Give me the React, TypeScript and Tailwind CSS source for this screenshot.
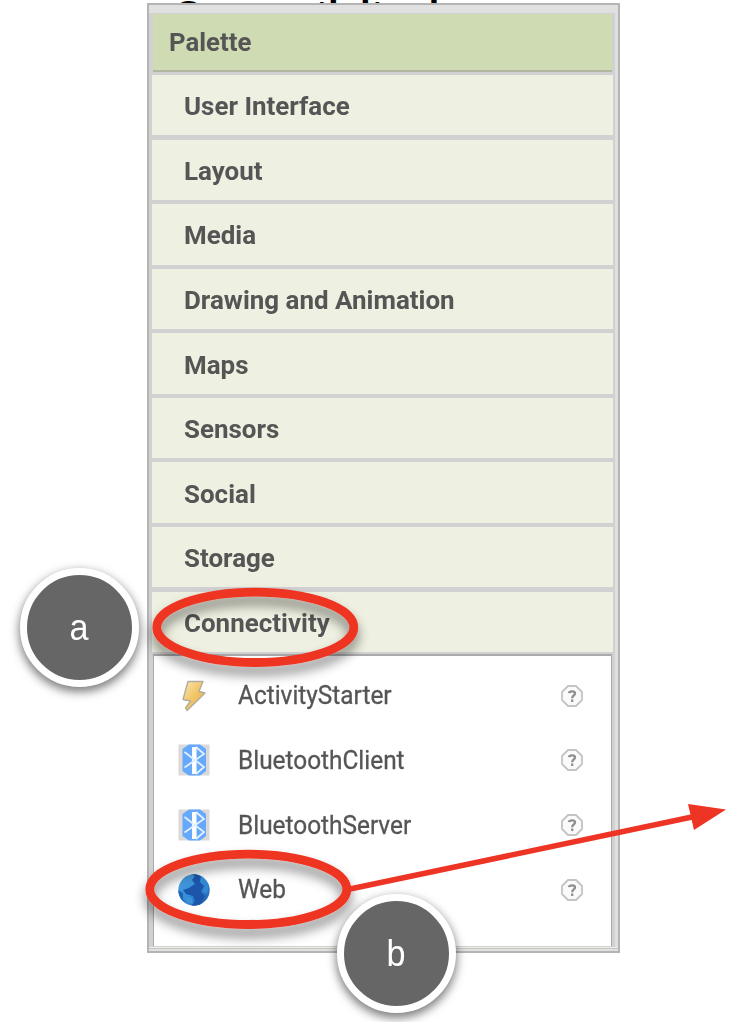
import React from "react";

const categories = [
  "User Interface",
  "Layout",
  "Media",
  "Drawing and Animation",
  "Maps",
  "Sensors",
  "Social",
  "Storage",
  "Connectivity",
];

function Bolt() {
  return (
    <svg className="h-8 w-8" viewBox="0 0 32 32">
      <defs>
        <linearGradient id="bolt" x1="0" y1="0" x2="1" y2="1">
          <stop offset="0" stopColor="#f8e9b4" />
          <stop offset="0.5" stopColor="#f2c566" />
          <stop offset="1" stopColor="#e3a948" />
        </linearGradient>
      </defs>
      <path d="M10 1.500H25L21 11.500L27 13L19 21L9 30.500L7.500 28L12.500 21L5 19.500Z" fill="url(#bolt)" stroke="#b3aca0" strokeWidth="1.400" strokeLinejoin="round" />
    </svg>
  );
}

function Bluetooth() {
  return (
    <svg className="h-8 w-8" viewBox="0 0 32 32">
      <path d="M.5 .5H31.5V31.5H.5Z" fill="#d9d9d9" />
      <path d="M11 .5H22L28 5V27L22 31.5H11L4.500 27V5Z" fill="#66a8fc" />
      <path d="M16.300 3V30" stroke="#fff" strokeWidth="4.500" />
      <path d="M6.500 8L26 23L18 30M6.500 23.500L26 10L18 3" fill="none" stroke="#e2f0ff" strokeWidth="1.800" />
    </svg>
  );
}

function Globe() {
  return (
    <svg className="h-8 w-8" viewBox="0 0 32 32">
      <defs>
        <linearGradient id="globe" x1="0" y1="0" x2="1" y2="1">
          <stop offset="0" stopColor="#50a5e8" />
          <stop offset="0.5" stopColor="#348bd8" />
          <stop offset="1" stopColor="#195ba9" />
        </linearGradient>
        <clipPath id="disc"><circle cx="16" cy="16" r="15.700" /></clipPath>
      </defs>
      <g clipPath="url(#disc)">
        <path d="M0 0H32V32H0Z" fill="url(#globe)" />
        <path d="M13 0L17 2L14 6L17 10L11 14L5 16L8 20L15 22L17 27L13 32H22L27 22L23 18L26 12L22 8L23 2L18 0Z" fill="#1b56aa" />
        <path d="M0 16L5 19L5 25L9 31H0Z" fill="#1d65b5" />
        <path d="M23 4L31 11L29 20L24 17L27 12Z" fill="#3288d0" />
        <path d="M7 23L14 24L15 30L9 29Z" fill="#3c91d8" />
      </g>
    </svg>
  );
}

const components = [
  { name: "ActivityStarter", icon: <Bolt /> },
  { name: "BluetoothClient", icon: <Bluetooth /> },
  { name: "BluetoothServer", icon: <Bluetooth /> },
  { name: "Web", icon: <Globe /> },
];

function Help() {
  return (
    <svg className="h-[22px] w-[22px]" viewBox="0 0 22 22">
      <path d="M7 1H15L21 7V15L15 21H7L1 15V7Z" fill="#fafafa" stroke="#c3c5c3" strokeWidth="1.800" strokeLinejoin="round" />
      <path d="M8 8.200C8.300 5.800 14 5.500 14 8.500C14 10.500 11.200 10.500 11.200 13.200M11.200 14.500V17" fill="none" stroke="#8e8e8e" strokeWidth="2.300" />
    </svg>
  );
}

function Badge({ label }: { label: string }) {
  return (
    <div className="flex h-[119px] w-[119px] items-center justify-center rounded-full border-[7.500px] border-white bg-[#666] text-[36px] leading-none text-white shadow-[0_4px_10px_1px_rgba(0,0,0,0.5)]">
      <span className="inline-block scale-x-[0.950]">{label}</span>
    </div>
  );
}

export default function App() {
  return (
    <main className="relative h-[1022px] w-[756px] overflow-hidden bg-white pt-[3px] pl-[147px] font-['Liberation_Sans',sans-serif]">
      <h1 className="absolute top-[-7px] left-[174px] h-3 overflow-hidden text-[38.500px] leading-[44px] font-bold whitespace-nowrap text-black">Connectivity d</h1>
      <section className="relative flex h-[950px] w-[473px] flex-col border-2 border-[#b4b4b4] bg-[#e0e0e0] pt-2 pr-[3px] font-['Roboto',sans-serif] text-[#555]">
        <div className="flex h-[934px] flex-col bg-[#d1d1d1] pr-[2px] pl-[3px]">
          <header className="mt-px mr-px ml-px flex h-[58px] shrink-0 items-center border-b-2 border-[#b0b6a0] bg-[#cfdbb3] pb-px pl-4 text-[26.500px] font-bold">
            <span className="inline-block origin-left scale-x-[0.972]">Palette</span>
          </header>
          <nav className="mt-[3px] flex shrink-0 flex-col gap-[4.200px]">
            {categories.map((c) => (
              <div key={c} className="flex h-[60.400px] items-center bg-[#eef0e1] pt-[2px] pl-[31.500px] text-[26.500px] font-bold">
                <span className="inline-block origin-left scale-x-[0.979] whitespace-nowrap">{c}</span>
              </div>
            ))}
          </nav>
          <div className="mt-[1.500px] mr-px ml-px flex h-[292px] shrink-0 flex-col border-t-2 border-r border-l border-[#aaa] bg-white pt-[8px]">
            {components.map((c) => (
              <div key={c.name} className="flex h-[64.600px] items-center pr-7 pl-6">
                {c.icon}
                <span className="ml-7 flex-1 origin-left scale-x-[0.938] text-[26px] [-webkit-text-stroke:0.3px_#555]">{c.name}</span>
                <Help />
              </div>
            ))}
          </div>
        </div>
        <div className="mr-[-3px] h-[2px] border-b border-[#c6c6c6] bg-[#eeeee2]" />
      </section>
      <svg className="absolute inset-0 h-[1022px] w-[756px]" viewBox="0 0 756 1022">
        <defs>
          <filter id="shade" x="-20%" y="-30%" width="140%" height="180%">
            <feDropShadow dx="0" dy="8" stdDeviation="6" floodColor="#000" floodOpacity="0.48" />
          </filter>
        </defs>
        <g fill="none" stroke="#ee3424" strokeWidth="8.800">
          <ellipse cx="255.300" cy="627.300" rx="98.500" ry="35.200" filter="url(#shade)" />
          <ellipse cx="248.300" cy="889.300" rx="98.500" ry="35.200" filter="url(#shade)" />
          <path d="M350 889L692 817" strokeWidth="5.500" />
        </g>
        <path d="M688 804L726 809.500L694 830Z" fill="#ee3424" />
      </svg>
      <div className="absolute top-[568px] left-[20px]"><Badge label="a" /></div>
      <div className="absolute top-[894px] left-[337px]"><Badge label="b" /></div>
    </main>
  );
}
